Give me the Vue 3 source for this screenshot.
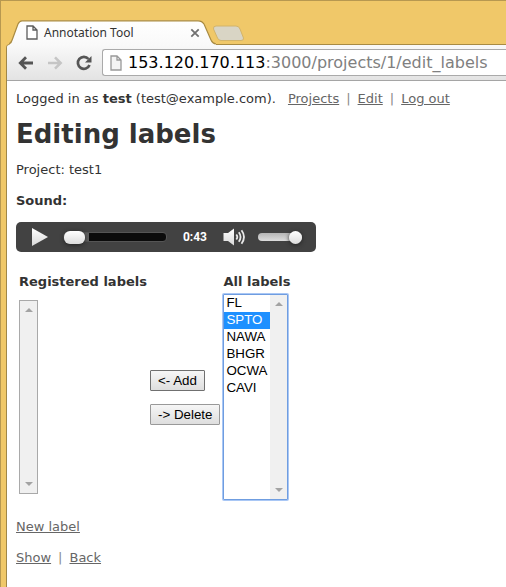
<script setup>
import { ref } from 'vue'

const address = ref('153.120.170.113:3000/projects/1/edit_labels')
const position = ref(0)
const volume = ref(100)
const registered = ref([])
const selectedRegistered = ref([])
const labels = ['FL', 'SPTO', 'NAWA', 'BHGR', 'OCWA', 'CAVI']
const selected = ref(['SPTO'])

function add() {
  for (const label of selected.value) {
    if (!registered.value.includes(label)) registered.value.push(label)
  }
}

function remove() {
  registered.value = registered.value.filter((label) => !selectedRegistered.value.includes(label))
}
</script>

<template>
  <div class="window">
    <header class="tabs">
      <div class="tab">
        <svg class="tab-shape" width="208" height="26" viewBox="0 0 208 26" aria-hidden="true">
          <defs>
            <linearGradient id="tab-fill" x1="0" y1="0" x2="0" y2="1">
              <stop offset="0" stop-color="#ffffff" />
              <stop offset="1" stop-color="#f9f9f9" />
            </linearGradient>
          </defs>
          <path d="M0 26 C2 24 3 22 3.500 20 L9 5 Q10.500 1.800 13 1.800 H189 Q193 1.800 195 5 L202 21 Q203.500 24.500 207 25 V26 Z" fill="url(#tab-fill)" />
          <path d="M0 25 C2 24 3 22 3.500 20 L9 5 Q10.500 1.800 13 1.800 H189 Q193 1.800 195 5 L202 21 Q203.500 24.500 207 25" fill="none" stroke="#a98b43" stroke-width="1.200" />
        </svg>
        <svg class="tab-page" width="12" height="15" viewBox="0 0 12 15" aria-hidden="true">
          <path d="M1 1 H7 L11 5 V14 H1 Z M7 1 V5 H11" fill="#fff" stroke="#5c5c5c" stroke-width="1.300" />
        </svg>
        <span class="tab-title">Annotation Tool</span>
        <button class="tab-close" type="button" aria-label="Close tab">
          <svg width="10" height="10" viewBox="0 0 10 10"><path d="M1.300 1.300 L8.700 8.700 M8.700 1.300 L1.300 8.700" stroke="#707070" stroke-width="1.800" /></svg>
        </button>
      </div>
      <button class="new-tab" type="button" aria-label="New tab">
        <svg width="33" height="17" viewBox="0 0 33 17">
          <path d="M4 1 H24 Q27 1 28 4 L31.500 13 Q32 15.500 29 15.500 H9 Q6.500 15.500 5.500 13 L1.500 4 Q1 1 4 1 Z" fill="#d9d5c5" stroke="#d3b46a" stroke-width="1" />
        </svg>
      </button>
    </header>

    <div class="pane">
      <nav class="toolbar">
        <button class="tool" type="button" aria-label="Back">
          <svg width="16" height="14" viewBox="0 0 16 14"><path d="M8 1.300 L2.300 7 L8 12.700 M2.500 7 H15" fill="none" stroke="#555" stroke-width="2.800" /></svg>
        </button>
        <button class="tool" type="button" aria-label="Forward">
          <svg width="16" height="14" viewBox="0 0 16 14"><path d="M8 1.300 L13.700 7 L8 12.700 M1 7 H13.500" fill="none" stroke="#c5c5c5" stroke-width="2.500" /></svg>
        </button>
        <button class="tool" type="button" aria-label="Reload">
          <svg width="16" height="16" viewBox="0 0 16 16">
            <path d="M12.500 4 A6 6 0 1 0 13.500 10" fill="none" stroke="#555" stroke-width="2.700" />
            <path d="M15.500 1 V7.500 H9 Z" fill="#555" />
          </svg>
        </button>
        <div class="address">
          <svg class="address-page" width="12" height="16" viewBox="0 0 12 16" aria-hidden="true">
            <path d="M1 1 H7 L11 5 V15 H1 Z M7 1 V5 H11" fill="#f4f4f4" stroke="#999" stroke-width="1.300" />
          </svg>
          <span class="url"><b>{{ address.slice(0, 15) }}</b>{{ address.slice(15) }}</span>
        </div>
      </nav>

      <main class="page">
        <div class="account">
          <span>Logged in as <strong>test</strong> (test@example.com).</span>
          <span class="links"><a href="#projects">Projects</a><i>|</i><a href="#edit">Edit</a><i>|</i><a href="#logout">Log out</a></span>
        </div>
        <h1>Editing labels</h1>
        <p class="project">Project: test1</p>
        <p class="sound"><strong>Sound:</strong></p>

        <div class="player">
          <button class="play" type="button" aria-label="Play">
            <svg width="18" height="20" viewBox="0 0 18 20">
              <defs>
                <linearGradient id="silver" x1="0" y1="0" x2="0" y2="1">
                  <stop offset="0" stop-color="#fff" />
                  <stop offset="1" stop-color="#d8d8d8" />
                </linearGradient>
              </defs>
              <path d="M1 1 L17 10 L1 19 Z" fill="url(#silver)" />
            </svg>
          </button>
          <input v-model="position" class="seek" type="range" min="0" max="100" aria-label="Position" />
          <span class="time">0:43</span>
          <button class="mute" type="button" aria-label="Mute">
            <svg width="24" height="18" viewBox="0 0 24 18">
              <path d="M0.500 5 H5 L11 0.500 V17.500 L5 13 H0.500 Z" fill="url(#silver)" />
              <path d="M13.300 6.500 Q15.300 9 13.300 11.500 M15.800 4.300 Q19.300 9 15.800 13.700 M18.500 2.300 Q23.500 9 18.500 15.700" fill="none" stroke="#e8e8e8" stroke-width="1.800" />
            </svg>
          </button>
          <input v-model="volume" class="volume" type="range" min="0" max="100" aria-label="Volume" />
        </div>

        <form class="labels" @submit.prevent>
          <label for="registered">Registered labels</label>
          <span></span>
          <label for="all">All labels</label>

          <div class="list">
            <select id="registered" v-model="selectedRegistered" class="options registered" :class="{ empty: !registered.length }" multiple>
              <option v-for="label in registered" :key="label">{{ label }}</option>
            </select>
            <span class="scroll" aria-hidden="true"><i class="up"></i><i class="down"></i></span>
          </div>
          <div class="moves">
            <button class="move add" type="button" @click="add">&lt;- Add</button>
            <button class="move" type="button" @click="remove">-&gt; Delete</button>
          </div>
          <div class="list active">
            <select id="all" v-model="selected" class="options" multiple>
              <option v-for="label in labels" :key="label">{{ label }}</option>
            </select>
            <span class="scroll" aria-hidden="true"><i class="up"></i><i class="down"></i></span>
          </div>
        </form>

        <p class="new-label"><a href="#new">New label</a></p>
        <p class="links"><a href="#show">Show</a><i>|</i><a href="#back">Back</a></p>
      </main>
    </div>
  </div>
</template>

<style>
body {
  margin: 0;
}
</style>

<style scoped>
.window {
  box-sizing: border-box;
  display: flex;
  flex-direction: column;
  min-height: 100vh;
  padding-left: 5px;
  border-top: 1px solid #b79850;
  border-left: 1px solid #b79850;
  background: #f0c869;
}

button {
  font-family: "Liberation Sans", Arial, sans-serif;
}

.tabs {
  display: flex;
  align-items: flex-end;
  height: 43px;
  padding-left: 3px;
}

.tab {
  position: relative;
  z-index: 1;
  display: flex;
  align-items: center;
  box-sizing: border-box;
  width: 203px;
  height: 25px;
  padding: 2px 12px 0 17px;
}

.tab-shape {
  position: absolute;
  top: 0;
  left: 0;
}

.tab-page,
.tab-title,
.tab-close {
  position: relative;
}

.tab-title {
  flex: 1;
  margin-left: 6px;
  color: #333;
  font: 12px/18px "Noto Sans", sans-serif;
}

.tab-close,
.new-tab,
.tool,
.play,
.mute {
  display: flex;
  padding: 0;
  border: 0;
  background: none;
}

.new-tab {
  margin-bottom: 2px;
}

.pane {
  display: flex;
  flex: 1;
  flex-direction: column;
  border-top: 1px solid #a98b43;
  border-left: 1px solid #a08748;
  border-top-left-radius: 4px;
  background: #fff;
}

.toolbar {
  display: flex;
  align-items: center;
  box-sizing: border-box;
  height: 36px;
  padding: 0 0 0 11px;
  border-bottom: 1px solid #a5a5a5;
  border-top-left-radius: 3px;
  background: linear-gradient(#f9f9f9, #e3e3e3);
}

.tool {
  margin-right: 13px;
}

.tool:nth-child(3) {
  margin-right: 10px;
}

.address {
  display: flex;
  flex: 1;
  align-items: center;
  box-sizing: border-box;
  min-width: 0;
  height: 27px;
  padding-left: 7px;
  border: 1px solid #aaa;
  border-right: 0;
  border-radius: 3px 0 0 3px;
  background: #fff;
}

.url {
  margin-left: 6px;
  color: #808080;
  font: 16px/24px "DejaVu Sans", Verdana, sans-serif;
  white-space: nowrap;
}

.url b {
  color: #000;
  font-weight: normal;
}

.page {
  flex: 1;
  padding: 9px;
  color: #333;
  font: 13px/18px "DejaVu Sans", Verdana, sans-serif;
}

.page p {
  margin: 0 0 13px;
}

.account {
  display: flex;
  flex-wrap: wrap;
  column-gap: 12px;
  margin-bottom: 10px;
}

.links {
  display: flex;
  gap: 7px;
}

.links i {
  color: #888;
  font-style: normal;
}

a {
  color: #666;
}

h1 {
  margin: 0 0 11px;
  font-size: 26px;
  line-height: 32px;
}

.page .sound {
  margin-bottom: 12px;
}

.player {
  display: flex;
  align-items: center;
  box-sizing: border-box;
  width: 300px;
  max-width: 100%;
  height: 30px;
  margin-bottom: 21px;
  padding: 0 14px 0 15px;
  border-radius: 5px;
  background: #424242;
}

.seek,
.volume {
  appearance: none;
  min-width: 0;
  margin: 0;
  border-radius: 4px;
}

.seek {
  flex: 1;
  height: 8px;
  margin-left: 14px;
  border: 1px solid #555;
  background: linear-gradient(90deg, #606060 25%, #0b0b0b 25%);
}

.seek::-webkit-slider-thumb {
  appearance: none;
  width: 21px;
  height: 13px;
  border-radius: 6px;
  background: linear-gradient(#fff, #dcdcdc);
  box-shadow: 0 1px 4px #222;
}

.time {
  margin: 0 16px;
  color: #fff;
  font: bold 12px/16px Roboto, sans-serif;
}

.volume {
  width: 44px;
  height: 8px;
  margin-left: 11px;
  background: linear-gradient(#b5b5b5, #ddd);
}

.volume::-webkit-slider-thumb {
  appearance: none;
  width: 13px;
  height: 13px;
  border-radius: 50%;
  background: linear-gradient(#fff, #dcdcdc);
  box-shadow: 0 1px 4px #222;
}

.labels {
  display: grid;
  grid-template-columns: repeat(3, max-content);
  align-items: center;
  gap: 3px;
  margin-bottom: 18px;
  padding: 0 3px;
}

.labels label {
  font-weight: bold;
}

.list {
  display: flex;
  justify-self: start;
  box-sizing: border-box;
  height: 194px;
  border: 1px solid #a9a9a9;
  background: #fff;
}

.list.active {
  height: 206px;
  border: 1px solid #6f9de0;
  border-radius: 1px;
  box-shadow: 0 0 0 1px #a9c7f5;
}

.options {
  appearance: none;
  width: 46px;
  height: 100%;
  margin: 0;
  padding: 0;
  overflow: hidden;
  border: 0;
  border-radius: 0;
  outline: 0;
  background: #fff;
  font-family: "Liberation Sans", Arial, sans-serif;
}

.options.empty {
  width: 0;
}

.options option {
  min-height: 17px;
  padding: 0 2px;
  color: #000;
  line-height: 17px;
}

.options option:checked {
  background: #1e90ff linear-gradient(#1e90ff, #1e90ff);
  color: #fff;
  -webkit-text-fill-color: #fff;
}

.scroll {
  display: flex;
  flex-direction: column;
  align-items: center;
  justify-content: space-between;
  box-sizing: border-box;
  width: 17px;
  padding: 7px 0;
  background: #f0f0f0;
}

.up,
.down {
  border: 4px solid transparent;
}

.up {
  border-top: 0;
  border-bottom-color: #a3a3a3;
}

.down {
  border-bottom: 0;
  border-top-color: #a3a3a3;
}

.moves {
  display: flex;
  flex-direction: column;
  align-items: flex-start;
  gap: 13px;
}

.move {
  height: 21px;
  padding: 0 7px;
  border: 1px solid #999;
  border-radius: 1px;
  background: linear-gradient(#f6f6f6, #dedede);
  color: #000;
}

.move.add {
  border-color: #707070;
}
</style>
